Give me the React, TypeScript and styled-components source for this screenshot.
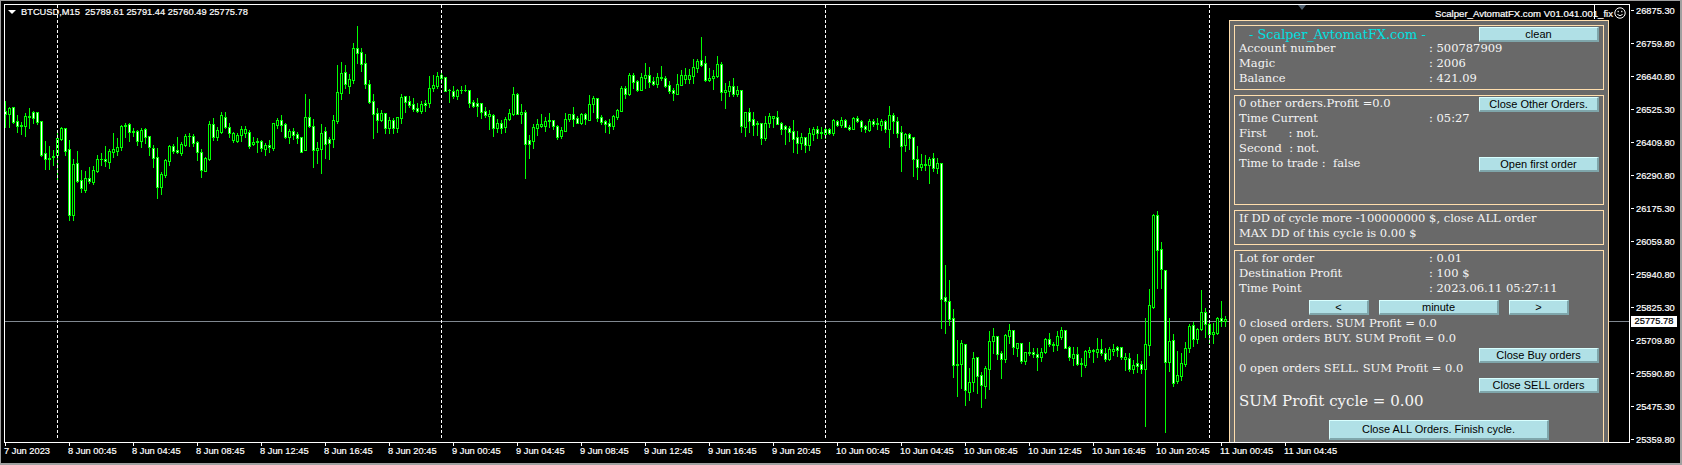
import React from "react";
import styled, { createGlobalStyle, css } from "styled-components";

const Global = createGlobalStyle`
  html, body { margin: 0; padding: 0; background: #000; }
  #root { width: 1682px; height: 465px; overflow: hidden; }
`;

type Row = [number, number, number, number, number];

const segA: Row[] = [
  [303,332,342,381,1],[321,325,342,381,0],[320,322,365,368,1],[345,364,377,395,1],[365,376,377,402,0],
  [338,349,377,407,0],[325,349,350,385,0],[332,336,353,370,1],[335,337,365,372,1],[363,364,464,467,1],
  [423,460,476,506,1],[437,475,476,506,0],[450,469,472,495,0],[400,414,466,540,0],[380,384,416,420,0],
  [383,385,452,465,1],[420,448,646,660,1],[478,492,644,660,0],[453,490,542,545,1],[510,541,565,575,1],
  [512,535,569,575,0],[502,535,544,550,1],[497,511,545,553,0],[465,477,513,517,0],[458,477,478,495,0],
  [438,478,484,497,1],[447,454,485,505,0],[400,448,455,470,0],[413,440,452,465,0],[375,378,440,450,0],
  [370,376,378,410,0],[370,372,395,422,1],[385,394,395,408,0],[390,394,422,435,1],[385,390,422,440,0],
  [385,388,410,430,1],[408,409,442,465,1],[435,445,475,500,1],[445,472,560,593,1],[515,522,560,582,0],
  [478,481,524,530,0],[435,439,482,495,0],[433,439,452,460,1],[410,451,457,460,1],[425,432,460,465,0],
  [403,409,435,438,0],[400,408,409,438,0],[403,409,428,437,1],[423,427,455,480,1],[448,455,510,530,1],
  [470,475,512,512,0],[362,373,476,480,0],[355,373,410,420,1],[380,390,410,420,0],[335,346,395,398,0],
  [335,352,380,385,1],[370,380,398,412,1],[395,398,421,427,0],[400,405,423,425,0],[377,388,405,424,0],
  [377,388,398,410,0],[390,397,438,445,1],[412,427,433,435,0],[415,424,425,455,0],[420,424,445,452,1],
  [430,435,446,465,0],[420,435,442,455,1],[368,370,443,450,0],[355,361,374,385,0],
];
const segB: Row[] = [
  [285,301,314,333,1],[310,313,350,353,1],[328,334,350,368,0],[325,334,344,358,1],[335,343,353,368,1],
  [350,352,395,395,1],[222,292,389,390,0],[237,292,317,320,1],[297,319,389,440,1],[365,385,389,430,0],
  [312,340,387,460,0],[320,334,371,415,1],[352,358,369,418,1],[285,301,356,380,0],[135,217,302,308,0],
  [126,160,218,236,0],[135,157,191,205,1],[162,178,197,218,0],[68,85,179,188,0],[18,85,98,130,1],
  [84,97,131,152,1],[102,130,193,203,1],[180,193,245,248,1],[222,244,281,353,1],[263,280,299,335,1],
  [270,280,300,303,0],[280,280,323,338,1],[292,301,323,340,0],[294,300,323,338,1],[293,292,323,336,0],
  [222,232,293,308,0],[228,229,245,275,1],[229,244,254,260,1],[235,253,267,272,1],[250,265,273,275,1],
  [243,253,273,278,0],[240,250,256,272,1],[168,205,250,260,0],[165,196,203,212,0],[155,168,197,203,0],
  [150,166,173,190,1],[170,172,212,212,1],[207,210,211,245,0],[198,212,227,235,1],[208,210,227,236,0],
  [198,210,211,220,0],[195,210,211,212,0],[210,211,248,262,1],[240,247,257,262,1],[235,250,257,288,1],
  [248,250,275,293,1],[262,274,284,290,1],[270,283,287,327,0],[283,286,323,348,1],[298,310,323,336,0],
  [300,310,323,338,1],[292,298,320,336,0],[267,280,298,300,0],[202,223,281,285,0],[220,223,281,283,1],
  [252,277,281,310,0],[270,277,371,473,1],[345,361,371,414,1],[312,322,362,384,0],[298,313,323,345,0],
  [282,313,317,320,0],[290,304,317,333,0],[280,301,304,320,0],[300,301,317,328,1],[315,317,350,356,1],
  [320,331,347,354,0],[280,298,332,334,0],[282,283,298,303,0],
];
const segC: Row[] = [
  [231,252,267,288,1],[258,264,278,280,1],[250,252,280,282,0],[250,252,268,282,1],[195,222,269,269,0],
  [198,204,221,247,0],[204,205,263,272,1],[255,262,275,282,1],[270,274,281,306,1],[267,279,288,309,1],
  [255,258,288,297,0],[237,240,261,267,0],[168,175,243,243,0],[168,175,191,205,1],[128,136,192,195,0],
  [130,136,156,174,1],[150,154,179,184,1],[128,142,179,180,0],[99,136,143,175,0],[111,136,156,172,1],
  [140,154,161,166,1],[128,142,162,172,0],[108,142,144,151,0],[138,145,167,170,1],[154,166,182,190,1],
  [175,181,190,210,1],[132,163,191,191,0],[121,136,164,165,0],[113,136,147,158,0],[117,136,147,158,0],
  [87,112,137,159,0],[87,94,113,127,0],[21,91,104,108,1],[78,100,149,152,1],[115,145,149,153,0],
  [120,139,143,177,0],[79,103,137,140,0],[96,102,185,210,1],[158,181,185,233,0],[153,169,183,197,0],
  [144,169,191,197,1],[168,181,191,197,0],[180,181,288,306,1],[247,247,290,318,0],[235,246,273,306,1],
  [247,268,285,315,1],[273,279,282,315,0],[279,280,323,342,1],[258,280,323,330,0],[250,259,278,291,0],
  [259,259,263,291,0],[243,262,281,283,1],[277,280,297,312,1],[285,289,297,342,1],[287,293,305,334,1],
  [270,304,327,366,1],[304,322,339,369,1],[308,322,339,357,0],[322,322,345,365,1],[294,310,345,360,0],
  [290,298,312,330,0],[288,298,308,324,1],[292,307,309,325,0],[295,298,312,325,0],[293,298,309,312,1],
  [268,271,308,316,0],[270,272,285,288,1],[262,271,285,292,0],[267,271,291,292,1],[285,290,296,301,1],
  [262,265,296,297,0],[258,265,273,277,1],[270,272,290,302,1],[284,289,296,307,1],[267,274,299,302,0],
];
const segD: Row[] = [
  [58,64,72,78,1],[55,68,72,86,0],[56,64,75,90,0],[60,64,87,95,1],[18,46,86,140,0],
  [40,46,64,100,1],[50,64,100,110,1],[78,97,137,212,1],[100,103,136,152,0],[100,103,113,147,1],
  [110,112,176,228,1],[138,178,200,237,1],[162,193,200,210,0],[165,193,194,210,0],[170,178,194,249,0],
  [160,175,203,213,1],[175,190,203,220,0],[188,190,596,684,1],[495,592,602,699,1],[540,604,658,675,1],
  [628,655,794,830,1],[720,793,794,888,0],[720,730,791,865,0],[733,733,869,915,1],[805,845,875,900,0],
  [756,775,845,874,0],[770,772,827,880,1],[817,826,856,921,1],[798,805,857,893,0],[694,724,806,866,0],
  [685,709,724,758,0],[709,709,761,777,1],[754,760,778,833,1],[703,706,776,785,0],[672,691,707,730,0],
  [690,691,742,761,1],[730,730,743,767,0],[730,730,782,788,1],[755,757,782,792,0],[726,757,759,765,0],
  [744,757,763,770,1],[745,763,770,810,1],[745,755,770,782,0],[713,717,755,758,0],[700,718,733,738,1],
  [725,733,734,752,0],[694,709,734,750,0],[682,691,710,716,0],[690,691,743,745,1],[738,742,772,780,1],
  [741,763,773,795,0],[741,763,791,795,1],[773,790,793,828,0],[750,754,794,800,0],[741,751,755,772,0],
  [748,750,754,786,0],[714,748,755,770,0],[717,748,760,765,1],[743,760,776,783,1],[741,748,776,780,0],
  [732,747,752,765,0],[738,741,750,768,1],[740,741,770,777,1],[758,771,776,810,0],[760,775,806,812,1],
];
const segE: Row[] = [
  [480,496,506,518,0],[462,490,497,515,1],[483,493,508,518,1],[355,433,508,678,0],[268,316,434,465,0],
  [42,45,320,323,0],[33,46,151,264,1],[127,148,208,264,1],[210,211,485,696,1],[355,424,485,513,0],
  [403,421,548,558,1],[453,526,542,548,0],[460,490,527,540,0],[427,445,491,498,0],[372,378,445,456,0],
  [366,376,416,438,1],[384,388,417,430,0],[270,337,388,390,0],[325,337,373,411,1],[360,373,401,430,1],
  [370,396,401,429,0],[352,355,399,402,0],[304,354,364,378,1],[348,358,364,378,0],
];

const segments: { base: number; rows: Row[] }[] = [
  { base: 0, rows: segA },
  { base: 20, rows: segB },
  { base: 30, rows: segC },
  { base: 100, rows: segD },
  { base: 200, rows: segE },
];

function buildPaths() {
  let wick = "";
  let body = "";
  let white = "";
  let black = "";
  let k = 0;
  for (const { base, rows } of segments) {
    for (const [hi, top, bot, lo, w] of rows) {
      const x = 5 + 4 * k;
      const y = (v: number) => Math.round(base + v / 3);
      const h = y(hi);
      const l = Math.max(y(lo), h);
      const t = y(top);
      const b = Math.max(y(bot), t);
      wick += `M${x} ${h}h1v${l - h + 1}h-1z`;
      body += `M${x - 1} ${t}h3v${b - t + 1}h-3z`;
      if (b - t >= 2) {
        const inner = `M${x} ${t + 1}h1v${b - t - 1}h-1z`;
        if (w) white += inner;
        else black += inner;
      }
      k += 1;
    }
  }
  return { wick, body, white, black };
}
const paths = buildPaths();

const GRID_X = [57, 441, 825, 1209];

const PRICES = [
  "26875.30","26759.80","26640.80","26525.30","26409.80","26290.80","26175.30","26059.80",
  "25940.80","25825.30","25709.80","25590.80","25475.30","25359.80",
];

const DAYS: [string, string[]][] = [
  ["8 Jun", ["00:45","04:45","08:45","12:45","16:45","20:45"]],
  ["9 Jun", ["00:45","04:45","08:45","12:45","16:45","20:45"]],
  ["10 Jun", ["00:45","04:45","08:45","12:45","16:45","20:45"]],
  ["11 Jun", ["00:45","04:45"]],
];
const TIMES = ["7 Jun 2023", ...DAYS.flatMap(([d, hs]) => hs.map((h) => `${d} ${h}`))];

const chartText = css`
  font-family: "Liberation Sans", Arial, sans-serif;
  font-size: 9.3px;
  -webkit-text-stroke: 0.2px currentColor;
`;

const Frame = styled.div`
  box-sizing: border-box;
  width: 1682px;
  height: 465px;
  background: #000;
  border-top: 1px solid #a0a0a0;
  border-left: 1px solid #a0a0a0;
  border-right: 2px solid #a0a0a0;
  border-bottom: 2px solid #a0a0a0;
  padding: 3px 0 0 3px;
  display: grid;
  grid-template-columns: 1626px 1fr;
  grid-template-rows: 439px 1fr;
  color: #fff;
`;

const Plot = styled.div`
  position: relative;
  box-sizing: border-box;
  border: 1px solid #fff;
  overflow: hidden;
  background: #000;
`;

const Chart = styled.svg`
  display: block;
  width: 1624px;
  height: 437px;
  shape-rendering: crispEdges;
`;

const SymbolLabel = styled.div`
  ${chartText}
  position: absolute;
  left: 3px;
  top: 1px;
  display: flex;
  align-items: center;
  height: 12px;
  gap: 5px;
  white-space: pre;
`;

const DownMark = styled.span`
  width: 0;
  height: 0;
  border-left: 4px solid transparent;
  border-right: 4px solid transparent;
  border-top: 4px solid #fff;
`;

const ExpertLabel = styled.div`
  ${chartText}
  font-size: 9.6px;
  position: absolute;
  top: 2px;
  right: 3px;
  display: flex;
  align-items: center;
  height: 12px;
  gap: 1px;
  white-space: pre;
`;

const ShiftMark = styled.div`
  position: absolute;
  left: 1293px;
  top: 0;
  width: 0;
  height: 0;
  border-left: 4.5px solid transparent;
  border-right: 4.5px solid transparent;
  border-top: 5px solid #506070;
`;

const Marker = styled.div`
  position: absolute;
  left: 1589px;
  top: 0;
  width: 3px;
  height: 14px;
  border-left: 1px solid #fff;
`;

const PriceAxis = styled.div`
  ${chartText}
  position: relative;
  display: flex;
  flex-direction: column;
`;

const PriceRow = styled.div`
  display: flex;
  align-items: center;
  flex: none;
  height: 13px;
  margin-bottom: 20px;
`;

const PriceTick = styled.span`
  width: 3px;
  height: 1px;
  margin-left: 1px;
  margin-right: 2px;
  background: #fff;
`;

const CurrentPrice = styled.div`
  position: absolute;
  left: 1px;
  top: 312px;
  width: 46px;
  height: 11px;
  line-height: 11px;
  background: #fff;
  color: #000;
  text-align: center;
`;

const TimeAxis = styled.div`
  ${chartText}
  grid-column: 1 / span 2;
  display: flex;
  padding-left: 1px;
`;

const TimeCell = styled.div`
  flex: 0 0 64px;
  display: flex;
  flex-direction: column;
`;

const TimeTick = styled.span`
  width: 1px;
  height: 3px;
  background: #fff;
`;

const TimeLabel = styled.span`
  margin-left: -1px;
  line-height: 11px;
  white-space: nowrap;
`;

const Panel = styled.div`
  position: absolute;
  left: 1224px;
  top: 15px;
  box-sizing: border-box;
  width: 380px;
  height: 440px;
  padding: 4px;
  background: #696969;
  border: 1px solid #ffdead;
  display: flex;
  flex-direction: column;
  gap: 5px;
  font-family: "DejaVu Serif", serif;
  font-size: 11.5px;
  color: #f5f5f5;
`;

const Box = styled.div<{ $h: number }>`
  box-sizing: border-box;
  flex: 0 0 ${(p) => p.$h}px;
  border: 1px solid #ffdead;
  padding: 0 4px;
`;

const Line = styled.div`
  display: flex;
  justify-content: space-between;
  align-items: flex-start;
  height: 15px;
  line-height: 15px;
  white-space: pre;
`;

const Label = styled.span`
  display: inline-block;
  width: 190px;
`;

const Title = styled.span`
  margin-left: 10px;
  line-height: 17px;
  color: #00e0e0;
  font-size: 12.9px;
`;

const Big = styled.div`
  height: 18px;
  padding-top: 1px;
  line-height: 18px;
  font-size: 15px;
  white-space: pre;
`;

const Btn = styled.button<{ $w: number; $h?: number }>`
  box-sizing: border-box;
  flex: none;
  width: ${(p) => p.$w}px;
  height: ${(p) => p.$h ?? 15}px;
  margin: 0;
  padding: 0;
  background: #b0e0e6;
  border-style: solid;
  border-width: 1px 2px 2px 1px;
  border-color: #d8ffff #7fa6ab #7fa6ab #d8ffff;
  font-family: "Liberation Sans", Arial, sans-serif;
  font-size: 11px;
  line-height: 11px;
  color: #000;
`;

const TopBtn = styled(Btn)`
  margin-top: 1px;
`;

const RightBtnLine = styled.div`
  display: flex;
  justify-content: flex-end;
  height: 15px;
  padding-top: 2px;
  box-sizing: border-box;
`;

const StepRow = styled.div`
  display: flex;
  gap: 10px;
  height: 15px;
  margin: 4px 0 1px 70px;
`;

const FinishRow = styled.div`
  display: flex;
  margin: 10px 0 0 90px;
`;

function Smiley() {
  return (
    <svg width="12" height="12" viewBox="0 0 12 12" fill="none" stroke="#fff" strokeWidth="1">
      <circle cx="6" cy="6" r="5.2" />
      <path d="M3.4 7.4 Q6 10 8.6 7.4" />
      <rect x="3.6" y="3.8" width="1.2" height="1.4" fill="#fff" stroke="none" />
      <rect x="7.2" y="3.8" width="1.2" height="1.4" fill="#fff" stroke="none" />
    </svg>
  );
}

export default function App() {
  return (
    <>
      <Global />
      <Frame>
        <Plot>
          <Chart viewBox="5 5 1624 437">
            <path d="M5 321.5H1629" stroke="#808890" strokeWidth="1" fill="none" />
            <path d={paths.wick} fill="#00ff00" />
            <path d={paths.body} fill="#00ff00" />
            <path d={paths.black} fill="#000" />
            <path d={paths.white} fill="#fff" />
            {GRID_X.map((x) => (
              <path key={x} d={`M${x + 0.5} 5V440`} stroke="#fff" strokeDasharray="3 2" fill="none" />
            ))}
          </Chart>
          <SymbolLabel>
            <DownMark />
            {"BTCUSD,M15  25789.61 25791.44 25760.49 25775.78"}
          </SymbolLabel>
          <ShiftMark />
          <Marker />
          <ExpertLabel>
            {"Scalper_AvtomatFX.com V01.041.001_fix"}
            <Smiley />
          </ExpertLabel>
          <Panel>
            <Box $h={65}>
              <Line>
                <Title>- Scalper_AvtomatFX.com -</Title>
                <TopBtn $w={120}>clean</TopBtn>
              </Line>
              <Line><span><Label>Account number</Label>: 500787909</span></Line>
              <Line><span><Label>Magic</Label>: 2006</span></Line>
              <Line><span><Label>Balance</Label>: 421.09</span></Line>
            </Box>
            <Box $h={110}>
              <Line>
                <span>0 other orders.Profit =0.0</span>
                <TopBtn $w={120}>Close Other Orders.</TopBtn>
              </Line>
              <Line><span><Label>Time Current</Label>: 05:27</span></Line>
              <Line><span>{"First      : not."}</span></Line>
              <Line><span>{"Second  : not."}</span></Line>
              <Line>
                <span>{"Time to trade :  false"}</span>
                <TopBtn $w={120}>Open first order</TopBtn>
              </Line>
            </Box>
            <Box $h={35}>
              <Line><span>If DD of cycle more -100000000 $, close ALL order</span></Line>
              <Line><span>MAX DD of this cycle is 0.00 $</span></Line>
            </Box>
            <Box $h={220}>
              <Line><span><Label>Lot for order</Label>: 0.01</span></Line>
              <Line><span><Label>Destination Profit</Label>: 100 $</span></Line>
              <Line><span><Label>Time Point</Label>: 2023.06.11 05:27:11</span></Line>
              <StepRow>
                <Btn $w={60}>&lt;</Btn>
                <Btn $w={120}>minute</Btn>
                <Btn $w={60}>&gt;</Btn>
              </StepRow>
              <Line><span>0 closed orders. SUM Profit = 0.0</span></Line>
              <Line><span>0 open orders BUY. SUM Profit = 0.0</span></Line>
              <RightBtnLine><Btn $w={120}>Close Buy orders</Btn></RightBtnLine>
              <Line><span>0 open orders SELL. SUM Profit = 0.0</span></Line>
              <RightBtnLine><Btn $w={120}>Close SELL orders</Btn></RightBtnLine>
              <Big>SUM Profit cycle = 0.00</Big>
              <FinishRow><Btn $w={220} $h={20}>Close ALL Orders. Finish cycle.</Btn></FinishRow>
            </Box>
          </Panel>
        </Plot>
        <PriceAxis>
          {PRICES.map((p) => (
            <PriceRow key={p}>
              <PriceTick />
              {p}
            </PriceRow>
          ))}
          <CurrentPrice>25775.78</CurrentPrice>
        </PriceAxis>
        <TimeAxis>
          {TIMES.map((t) => (
            <TimeCell key={t}>
              <TimeTick />
              <TimeLabel>{t}</TimeLabel>
            </TimeCell>
          ))}
        </TimeAxis>
      </Frame>
    </>
  );
}
